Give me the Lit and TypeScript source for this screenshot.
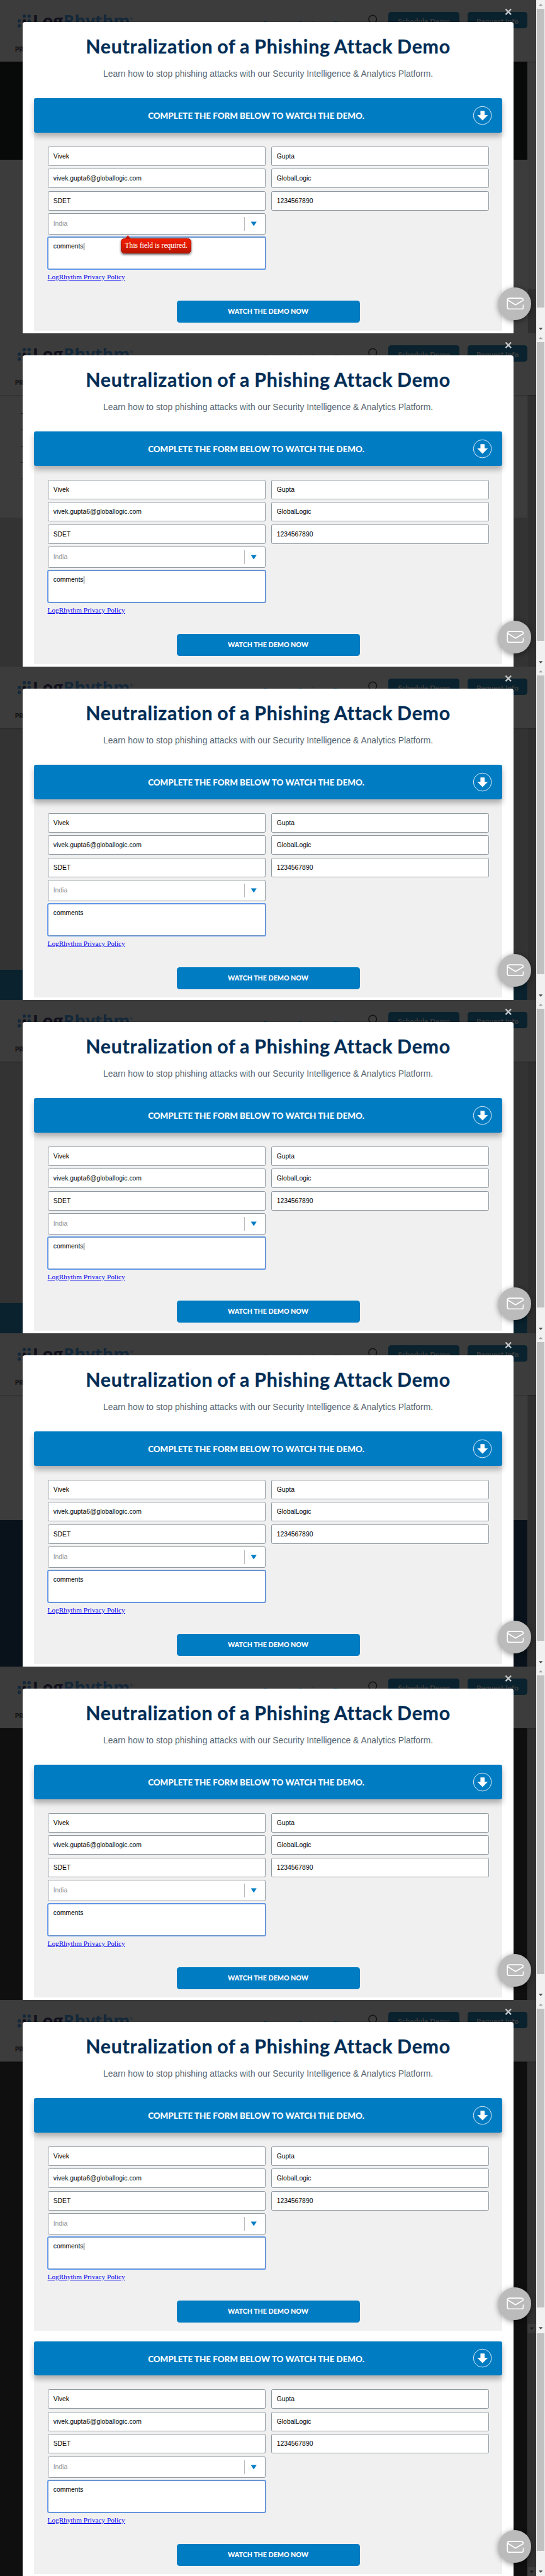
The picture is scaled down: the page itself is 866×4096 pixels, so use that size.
import { LitElement, html, css, nothing } from "lit";
import { customElement, property } from "lit/decorators.js";
import { styleMap } from "lit/directives/style-map.js";

interface Band { h?: number; color: string; }
interface Frame {
  bands: Band[];
  caret: boolean;
  error?: boolean;
  tail?: boolean;
  lines?: boolean;
  thumbAt?: number;
  innerEnd?: boolean;
}

const GREY = "#3c3c3c";
const frames: Frame[] = [
  { bands: [{ h: 270, color: "#080a09" }, { color: GREY }], caret: true, error: true, thumbAt: 627 },
  { bands: [{ h: 337, color: GREY }, { color: "#333333" }], caret: true, lines: true },
  { bands: [{ h: 665, color: "#333333" }, { color: "#09222e" }], caret: false },
  { bands: [{ h: 665, color: "#333333" }, { color: "#09222e" }], caret: true },
  { bands: [{ h: 344, color: GREY }, { color: "#09121b" }], caret: false },
  { bands: [{ color: "#0f0f0f" }], caret: false },
  { bands: [{ color: "#0f0f0f" }], caret: true, innerEnd: true },
  { bands: [{ color: "#0f0f0f" }], caret: false, tail: true, innerEnd: true },
];

@customElement("site-page")
class SitePage extends LitElement {
  @property({ attribute: false }) frame!: Frame;

  static styles = css`
    :host { display: flex; flex-direction: column; height: 100%; width: 1475px; }
    .head { flex: none; height: 170px; background: #3c3c3c; display: flex; flex-direction: column; box-shadow: 0 1px 3px rgba(0,0,0,.25); z-index: 1; }
    .top { height: 125px; display: flex; align-items: flex-start; padding-left: 41px; box-sizing: border-box; }
    .logo { width: 684px; height: 100px; flex: none; }
    .links { display: flex; margin-top: 53px; font: 19px/24px Lato, sans-serif; color: #0c3040; width: 289px; }
    .links span { width: 96.5px; }
    .search { margin-top: 38px; width: 55px; height: 40px; flex: none; }
    .cta { margin-top: 33px; height: 45px; border-radius: 8px; background: #09222e; color: #3c3c3c; font: 900 20.5px/52px Lato, sans-serif; text-align: center; }
    .cta.a { width: 196px; margin-right: 22px; }
    .cta.b { width: 165px; }
    .menu { padding-left: 41px; font: 900 18px/22px Lato, sans-serif; color: #111; }
    .main { flex: 1; display: flex; min-height: 0; }
    .bands { width: 1451px; display: flex; flex-direction: column; }
    .band.grow { flex: 1; }
    .bar { width: 24px; background: #343434; display: flex; flex-direction: column; align-items: center; }
    .bar.first { background: #3a3a3a; }
    .thumb { width: 21px; flex: 1; background: #2f2f2f; }
    .btn { height: 26px; width: 24px; background: #3a3a3a; }
    .lines { display: flex; flex-direction: column; gap: 43px; padding: 50px 0 0 57px; }
    .lines i { display: block; width: 8px; height: 2px; background: #151515; }
    .tab { font: 18px/12px Lato, sans-serif; color: #111; height: 0; padding-left: 49px; }
  `;

  render() {
    const f = this.frame;
    return html`
      ${f.tail ? nothing : html`<div class="head">
        <div class="top">
          <svg class="logo" viewBox="41 0 684 100">
            <g fill="#14283a">
              <circle cx="66" cy="44.5" r="4.6"/><circle cx="79.5" cy="44.5" r="4.6"/>
              <circle cx="52.5" cy="57.5" r="4.6"/><circle cx="79.5" cy="57.5" r="4.6"/>
              <circle cx="52.5" cy="71" r="4.6"/><circle cx="66" cy="71" r="4.6"/>
            </g>
            <circle cx="66" cy="57.5" r="4.6" fill="#0f0f1c"/>
            <g font-family="Open Sans, sans-serif" font-weight="700" font-size="46">
              <text x="89" y="74" textLength="84" lengthAdjust="spacingAndGlyphs" fill="#0f0f1c">Log</text>
              <text x="174" y="74" textLength="183" lengthAdjust="spacingAndGlyphs" fill="#14283a">Rhythm</text>
            </g>
            <text x="357" y="55" font-family="Open Sans, sans-serif" font-size="10" fill="#14283a">®</text>
          </svg>
          <div class="links"><span>Partners</span><span>Services</span><span>Blog</span></div>
          <svg class="search" viewBox="0 0 55 40"><g fill="none" stroke="#131313" stroke-width="2.6">
            <circle cx="12.5" cy="15" r="11"/><path d="M20 23l9 10"/></g></svg>
          <div class="cta a">Schedule Demo</div>
          <div class="cta b">Request Info</div>
        </div>
        <div class="menu">PRODUCTS</div>
      </div>`}
      <div class="main">
        <div class="bands">
          ${f.lines ? html`<div class="tab">TO</div>` : nothing}
          ${f.bands.map(b => html`<div class="band ${b.h ? "" : "grow"}" style=${styleMap({ height: b.h ? b.h + "px" : "auto", background: b.color })}>
            ${f.lines && b.h ? html`<div class="lines"><i></i><i></i><i></i><i></i><i></i></div>` : nothing}
          </div>`)}
        </div>
        <div class="bar ${f.thumbAt ? "first" : ""}">
          ${f.thumbAt ? html`<div style=${styleMap({ height: f.thumbAt + "px" })}></div>` : nothing}
          <div class="thumb"></div>
          ${f.innerEnd ? html`<svg class="btn" viewBox="0 0 24 26"><path d="M6.5 10h11l-5.5 6z" fill="#161616"/></svg>` : nothing}
        </div>
      </div>`;
  }
}

@customElement("demo-modal")
class DemoModal extends LitElement {
  @property({ type: Boolean }) caret = false;
  @property({ type: Boolean }) error = false;
  @property({ type: Boolean }) bare = false;

  static styles = css`
    :host { display: flex; flex-direction: column; width: 1350px; background: #fff; border-radius: 7px 7px 0 0; box-sizing: border-box; padding: 0 30px 7px; }
    :host([bare]) { border-radius: 0; }
    .top { height: 22px; flex: none; }
    .title { height: 129px; flex: none; padding-top: 33px; box-sizing: border-box; text-align: center; white-space: nowrap; color: #002d56; font: 700 52.5px/66px Lato, sans-serif; letter-spacing: 1.3px; word-spacing: -2px; -webkit-text-stroke: 0.5px #002d56; }
    .sub { height: 81px; flex: none; text-align: center; color: #566673; font: 24px/28px "Liberation Sans", Arial, sans-serif; white-space: nowrap; }
    .card { height: 641px; flex: none; background: #f0f0f0; display: flex; flex-direction: column; }
    .bar { height: 95px; flex: none; border-radius: 6px; background: #007cc3; box-shadow: 0 10px 15px rgba(0,0,0,.28); display: flex; align-items: center; color: #fff; }
    .bar span { width: 1224px; text-align: center; font: 900 23.2px/28px Lato, sans-serif; padding-top: 4px; white-space: nowrap; }
    .bar svg { width: 54px; height: 54px; margin-left: -17px; }
    .form { display: grid; grid-template-columns: 600px 600px; column-gap: 15px; row-gap: 8px; padding: 38px 37px 0 38px; font: 18px "Liberation Sans", Arial, sans-serif; color: #000; }
    .f { box-sizing: border-box; height: 53.6px; border: 2px solid #8e989f; border-radius: 4px; background: #fff; padding-left: 14px; line-height: 51px; }
    .sel { height: 58px; display: flex; justify-content: space-between; align-items: center; color: #8e979d; line-height: 54px; }
    .sel .arrow { border-left: 2px solid #bbb; height: 39px; width: 56px; display: flex; align-items: center; }
    .sel svg { width: 18px; height: 14px; margin-left: 17px; }
    .slot { grid-column: 1 / 3; width: 600px; position: relative; }
    .area { height: 89px; padding-top: 14px; line-height: 22px; box-shadow: 0 0 0 1.6px #5b96f0; border-color: #6f95c6; display: flex; align-items: flex-start; margin-top: -1px; }
    .caret { width: 1.8px; height: 20px; background: #000; margin-top: 1px; }
    .link { padding: 10px 0 0 38px; font: 19.5px/24px "Liberation Serif", "Times New Roman", serif; color: #0000ee; text-decoration: underline; }
    .go { width: 504px; height: 60px; margin: 53px 0 0 393px; border-radius: 8px; background: #007cc3; color: #fff; font: 900 18.5px/60px Lato, sans-serif; text-align: center; }
    .tip { position: absolute; left: 202px; top: 2px; width: 194px; height: 42px; box-sizing: border-box; border: 2px solid #b51500; border-radius: 9px; background: linear-gradient(#ee1c00, #e01a00 45%, #b51500); color: #fff; font: 20px/38px "Liberation Serif", serif; text-align: center; box-shadow: 0 3px 6px rgba(0,0,0,.6); white-space: nowrap; }
    .tip svg { position: absolute; left: 9px; top: -10px; width: 18px; height: 11px; }
  `;

  render() {
    return html`
      ${this.bare ? html`<div class="top"></div>` : html`
      <div class="title">Neutralization of a Phishing Attack Demo</div>
      <div class="sub">Learn how to stop phishing attacks with our Security Intelligence &amp; Analytics Platform.</div>`}
      <div class="card">
        <div class="bar">
          <span>COMPLETE THE FORM BELOW TO WATCH THE DEMO.</span>
          <svg viewBox="0 0 54 54"><circle cx="27" cy="27" r="24.8" fill="none" stroke="#fff" stroke-width="1.5"/>
            <path d="M21.5 14.5h11.5v11.3h9L27.3 40.8 12.7 25.800h8.800z" fill="#fff"/></svg>
        </div>
        <div class="form">
          <div class="f">Vivek</div><div class="f">Gupta</div>
          <div class="f">vivek.gupta6@globallogic.com</div><div class="f">GlobalLogic</div>
          <div class="f">SDET</div><div class="f">1234567890</div>
          <div class="f sel">India<div class="arrow"><svg viewBox="0 0 18 14"><path d="M1 1h16L9 13z" fill="#007cc3"/></svg></div></div>
          <div class="slot">
            <div class="f area">comments${this.caret ? html`<i class="caret"></i>` : nothing}</div>
            ${this.error ? html`<div class="tip"><svg viewBox="0 0 18 11"><path d="M0 11L9 0l9 11z" fill="#c41700"/></svg>This field is required.</div>` : nothing}
          </div>
        </div>
        <div class="link">LogRhythm Privacy Policy</div>
        <div class="go">WATCH THE DEMO NOW</div>
      </div>`;
  }
}

@customElement("capture-frame")
class CaptureFrame extends LitElement {
  @property({ attribute: false }) frame!: Frame;

  static styles = css`
    :host { display: block; width: 1500px; }
    .wrap { position: relative; display: flex; height: 918px; overflow: hidden; }
    .wrap.tail { height: 670px; }
    .modal { position: absolute; left: 63px; bottom: 0; z-index: 2; }
    .close { position: absolute; left: 1390px; top: 22px; width: 20px; height: 20px; z-index: 3; }
    .fab { position: absolute; z-index: 3; left: 1372.5px; bottom: 37px; width: 90px; height: 90px; border-radius: 50%; background: #bbb; box-shadow: 0 4px 16px rgba(0,0,0,.45); display: flex; align-items: center; justify-content: center; }
    .fab svg { width: 48px; height: 34px; }
    .scroll { width: 25px; background: #f1f1f1; display: flex; flex-direction: column; align-items: center; position: relative; z-index: 4; }
    .thumb { width: 21px; height: 822px; background: #c1c1c1; }
    .tail .thumb { height: 599px; }
    .up { width: 25px; height: 25px; }
    .down { width: 25px; height: 25px; margin-top: auto; }
  `;

  render() {
    const f = this.frame;
    return html`<div class="wrap ${f.tail ? "tail" : ""}">
      <site-page .frame=${f}></site-page>
      <div class="scroll">
        ${f.tail ? nothing : html`<svg class="up" viewBox="0 0 25 25"><path d="M7 16h11l-5.500-6z" fill="#a3a3a3"/></svg>`}
        <div class="thumb"></div>
        <svg class="down" viewBox="0 0 25 25"><path d="M7 9h11l-5.500 6.500z" fill="#505050"/></svg>
      </div>
      <demo-modal class="modal" ?caret=${f.caret} ?error=${!!f.error} ?bare=${!!f.tail}></demo-modal>
      ${f.tail ? nothing : html`<svg class="close" viewBox="0 0 20 20"><path d="M2.500 2.500l15 15M17.500 2.500l-15 15" stroke="#c4c8cb" stroke-width="4"/></svg>`}
      <div class="fab"><svg viewBox="0 0 48 34" fill="none" stroke="#fff" stroke-width="3" stroke-linecap="round" stroke-linejoin="round">
        <path d="M46 21v5q0 6-6 6H8q-6 0-6-6V8q0-6 6-6h32q6 0 6 6L24.500 20.500 2 6.500"/></svg></div>
    </div>`;
  }
}

@customElement("app-root")
class AppRoot extends LitElement {
  static styles = css`
    :host { display: block; width: 866px; height: 4096px; overflow: hidden; background: #f1f1f1; }
    .sheet { width: 1500px; zoom: 0.57733; display: flex; flex-direction: column; }
  `;

  render() {
    return html`<div class="sheet">${frames.map(f => html`<capture-frame .frame=${f}></capture-frame>`)}</div>`;
  }
}
